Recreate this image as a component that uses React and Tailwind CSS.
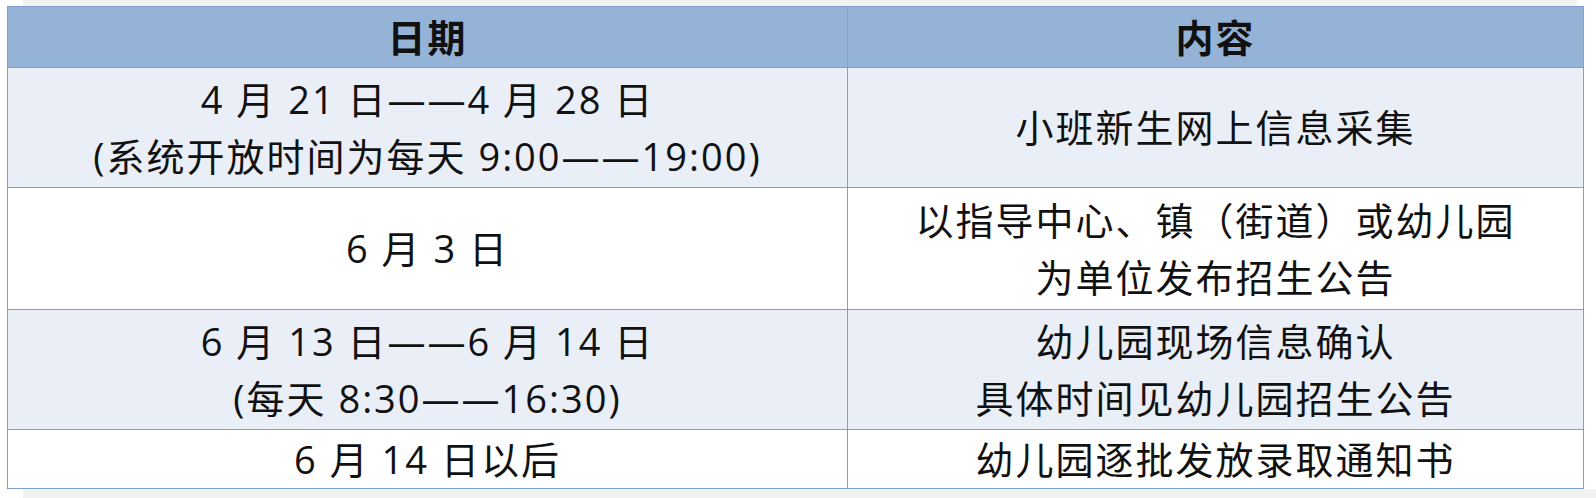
import React from "react";

const rows = [
  {
    date: ["4 月 21 日——4 月 28 日", "(系统开放时间为每天 9:00——19:00)"],
    content: ["小班新生网上信息采集"],
    h: "h-[120px]",
    bg: "bg-[#e9eef7]",
  },
  {
    date: ["6 月 3 日"],
    content: ["以指导中心、镇（街道）或幼儿园", "为单位发布招生公告"],
    h: "h-[122px]",
    bg: "bg-white",
  },
  {
    date: ["6 月 13 日——6 月 14 日", "(每天 8:30——16:30)"],
    content: ["幼儿园现场信息确认", "具体时间见幼儿园招生公告"],
    h: "h-[120px]",
    bg: "bg-[#e9eef7]",
  },
  {
    date: ["6 月 14 日以后"],
    content: ["幼儿园逐批发放录取通知书"],
    h: "h-[59px]",
    bg: "bg-white",
  },
];

const Lines = ({ lines }) => (
  <>
    {lines.map((l) => (
      <div key={l}>{l}</div>
    ))}
  </>
);

export default function App() {
  return (
    <div
      className="w-[1596px] h-[498px] bg-white text-[#111] overflow-hidden"
      style={{ fontFamily: '"Open Sans", "Noto Sans CJK SC", sans-serif' }}
    >
      {/* top shadow strip */}
      <div className="ml-[23px] w-[1554px] h-[6px] bg-[#f2f2f2]" />

      <table className="ml-[7px] w-[1576px] border-collapse table-fixed text-[38px] tracking-[2px] leading-[57px] text-center">
        <colgroup>
          <col className="w-[840px]" />
          <col className="w-[736px]" />
        </colgroup>
        <thead>
          <tr className="h-[61px] bg-[#95b3d7]">
            <th className="border border-[#7f9fd0] font-bold">日期</th>
            <th className="border border-[#7f9fd0] font-bold">内容</th>
          </tr>
        </thead>
        <tbody>
          {rows.map((r, i) => (
            <tr key={i} className={`${r.h} ${r.bg}`}>
              <td className="border border-[#7f9fd0] align-middle">
                <Lines lines={r.date} />
              </td>
              <td className="border border-[#7f9fd0] align-middle">
                <Lines lines={r.content} />
              </td>
            </tr>
          ))}
        </tbody>
      </table>

      {/* bottom shadow strip */}
      <div className="ml-[23px] h-[10px] bg-[#f2f2f2]" />
    </div>
  );
}
